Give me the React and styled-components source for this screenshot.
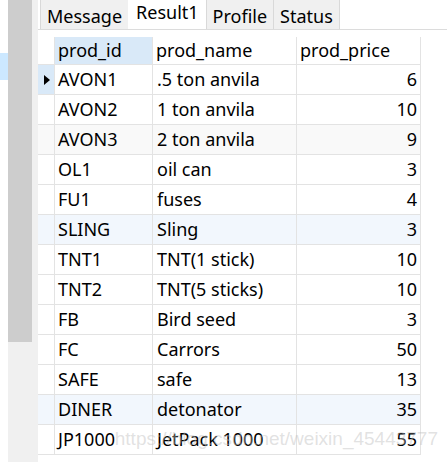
import React from "react";
import styled, { createGlobalStyle } from "styled-components";

const rows = [
  { id: "AVON1", name: ".5 ton anvila", price: 6, current: true },
  { id: "AVON2", name: "1 ton anvila", price: 10 },
  { id: "AVON3", name: "2 ton anvila", price: 9, tint: "#f9f9f9" },
  { id: "OL1", name: "oil can", price: 3 },
  { id: "FU1", name: "fuses", price: 4 },
  { id: "SLING", name: "Sling", price: 3, tint: "#f2f7fd" },
  { id: "TNT1", name: "TNT(1 stick)", price: 10 },
  { id: "TNT2", name: "TNT(5 sticks)", price: 10 },
  { id: "FB", name: "Bird seed", price: 3 },
  { id: "FC", name: "Carrors", price: 50 },
  { id: "SAFE", name: "safe", price: 13 },
  { id: "DINER", name: "detonator", price: 35, tint: "#f2f7fd" },
  { id: "JP1000", name: "JetPack 1000", price: 55 },
];

const GlobalStyle = createGlobalStyle`
  html, body {
    margin: 0;
    padding: 0;
    background: #ffffff;
    overflow: hidden;
  }
  body {
    font-family: "Noto Sans", "Open Sans", sans-serif;
  }
`;

const Page = styled.div`
  position: relative;
  display: flex;
  width: 447px;
  height: 462px;
  overflow: hidden;
`;

const SidePanel = styled.div`
  width: 8px;
  padding-top: 53px;
  background: #ffffff;
`;

const SideSelection = styled.div`
  height: 27px;
  background: #cce8ff;
`;

const ScrollTrack = styled.div`
  width: 24px;
  display: flex;
  flex-direction: column;
  background: #f0f0f0;
`;

const ScrollThumb = styled.div`
  height: 342px;
  background: #cdcdcd;
`;

const Gutter = styled.div`
  width: 6px;
  background: #f0f0f0;
`;

const Main = styled.div`
  flex: 1;
  display: flex;
  flex-direction: column;
`;

const TabBar = styled.div`
  display: flex;
  align-items: stretch;
  height: 29px;
  padding-left: 2px;
  border-bottom: 1px solid #dcdcdc;
`;

const Tab = styled.div`
  padding: ${(p) => (p.$active ? "1px 7px 0" : "5px 6px 0")};
  font-size: 18px;
  line-height: 22px;
  color: #000;
  background: ${(p) => (p.$active ? "#ffffff" : "#f0f0f0")};
  border-right: 1px solid ${(p) => (p.$active ? "transparent" : "#d9d9d9")};
  border-left: 1px solid ${(p) => (p.$active ? "transparent" : "#d9d9d9")};
  margin-left: ${(p) => (p.$first ? "0" : "-1px")};
`;

const Grid = styled.div`
  margin-top: 7px;
  display: grid;
  grid-template-columns: 17px 98px 144px 124px;
  width: 383px;
`;

const HeadCell = styled.div`
  height: 27px;
  line-height: 27px;
  padding-left: 3px;
  font-size: 18px;
  color: #000;
  background: ${(p) => (p.$selected ? "#d9e9f8" : "#ffffff")};
  border-right: 1px solid #e3e3e3;
  border-bottom: 1px solid #e3e3e3;
  white-space: nowrap;
  overflow: hidden;
`;

const Cell = styled.div`
  height: 29px;
  line-height: 29px;
  padding: 0 ${(p) => (p.$right ? "3px" : "0")} 0 ${(p) => p.$pad || "3px"};
  font-size: 18px;
  color: #000;
  text-align: ${(p) => (p.$right ? "right" : "left")};
  background: ${(p) => p.$bg || "#ffffff"};
  border-right: 1px solid #e3e3e3;
  border-bottom: 1px solid #e3e3e3;
  white-space: nowrap;
  overflow: hidden;
`;

const Marker = styled.div`
  height: 29px;
  display: flex;
  align-items: center;
  padding-left: 6px;
  background: ${(p) => (p.$current ? "#d9e9f8" : p.$bg || "#ffffff")};
  border-right: 1px solid #e3e3e3;
  border-bottom: 1px solid #e3e3e3;
`;

const Arrow = styled.span`
  width: 0;
  height: 0;
  border-left: 6px solid #000;
  border-top: 5px solid transparent;
  border-bottom: 5px solid transparent;
`;

const Watermark = styled.div`
  position: absolute;
  right: 9px;
  top: 428px;
  font-family: "Liberation Sans", Arial, sans-serif;
  font-size: 19px;
  color: rgba(190, 190, 190, 0.45);
  pointer-events: none;
  white-space: nowrap;
`;

export default function App() {
  return (
    <>
      <GlobalStyle />
      <Page>
        <SidePanel>
          <SideSelection />
        </SidePanel>
        <ScrollTrack>
          <ScrollThumb />
        </ScrollTrack>
        <Gutter />
        <Main>
          <TabBar>
            <Tab $first>Message</Tab>
            <Tab $active>Result1</Tab>
            <Tab>Profile</Tab>
            <Tab>Status</Tab>
          </TabBar>
          <Grid>
            <HeadCell />
            <HeadCell $selected>prod_id</HeadCell>
            <HeadCell>prod_name</HeadCell>
            <HeadCell>prod_price</HeadCell>
            {rows.map((r) => (
              <React.Fragment key={r.id}>
                <Marker $current={r.current} $bg={r.tint}>
                  {r.current && <Arrow />}
                </Marker>
                <Cell $bg={r.tint}>{r.id}</Cell>
                <Cell $bg={r.tint} $pad="4px">
                  {r.name}
                </Cell>
                <Cell $bg={r.tint} $right>
                  {r.price}
                </Cell>
              </React.Fragment>
            ))}
          </Grid>
        </Main>
        <Watermark>https://blog.csdn.net/weixin_45443777</Watermark>
      </Page>
    </>
  );
}
